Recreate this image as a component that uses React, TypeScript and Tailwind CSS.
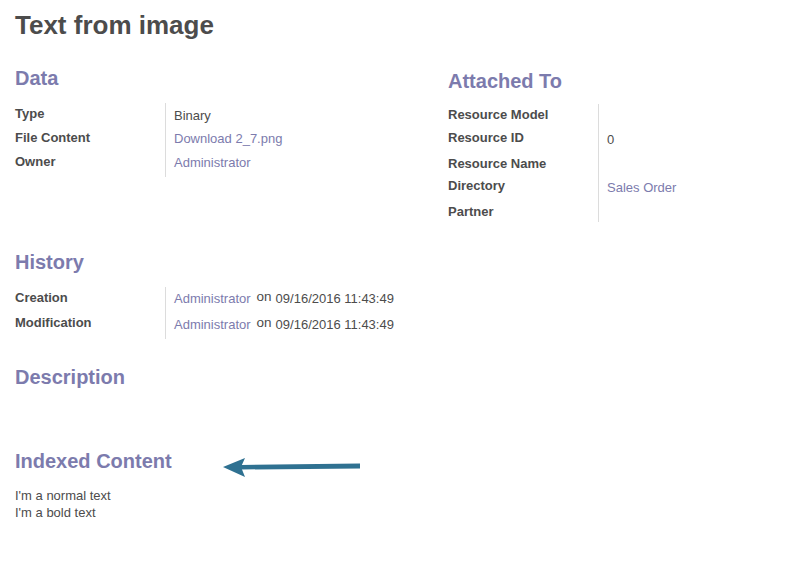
import React from "react";

const font = { fontFamily: '"Liberation Sans", Arial, Helvetica, sans-serif' };

type Row = { label: string; value?: React.ReactNode; h: number; vpad?: number };

function Group({ rows, labelW = 150 }: { rows: Row[]; labelW?: number }) {
  return (
    <div className="flex flex-col">
      {rows.map((r, i) => (
        <div key={i} className="flex" style={{ height: r.h }}>
          <div
            className="shrink-0 pt-[2px] text-[13px] leading-[18px] font-bold text-[#4c4c4c]"
            style={{ width: labelW }}
          >
            {r.label}
          </div>
          <div
            className="flex-1 border-l border-[#dcdcdc] pl-[8px] text-[13px] leading-[18px] text-[#4c4c4c] whitespace-nowrap"
            style={{ paddingTop: r.vpad ?? 3 }}
          >
            {r.value}
          </div>
        </div>
      ))}
    </div>
  );
}

const Link = ({ children }: { children: React.ReactNode }) => (
  <span className="text-[#7c7bad]">{children}</span>
);

const Heading = ({ children, className = "" }: { children: React.ReactNode; className?: string }) => (
  <h2 className={`text-[20px] leading-[24px] font-bold text-[#7c7bad] ${className}`}>{children}</h2>
);

function HistoryValue() {
  return (
    <span className="inline-flex items-baseline">
      <Link>Administrator</Link>
      <span className="relative -top-[2px] ml-[6px] text-[13.5px]">on</span>
      <span className="ml-[4px]">09/16/2016 11:43:49</span>
    </span>
  );
}

export default function App() {
  return (
    <div className="relative min-h-[582px] w-[800px] bg-white px-[15px] pt-[10px]" style={font}>
      <h1 className="text-[26px] leading-[30px] font-bold text-[#4c4c4c]">Text from image</h1>

      <div className="grid grid-cols-[433px_1fr] items-start">
        <div className="flex flex-col">
          <Heading className="mt-[26px]">Data</Heading>
          <div className="mt-[13px]">
            <Group
              rows={[
                { label: "Type", value: "Binary", h: 24, vpad: 4 },
                { label: "File Content", value: <Link>Download 2_7.png</Link>, h: 24 },
                { label: "Owner", value: <Link>Administrator</Link>, h: 26 },
              ]}
            />
          </div>
        </div>
        <div className="flex flex-col">
          <Heading className="mt-[29px]">Attached To</Heading>
          <div className="mt-[11px]">
            <Group
              rows={[
                { label: "Resource Model", h: 23 },
                { label: "Resource ID", value: "0", h: 26, vpad: 4 },
                { label: "Resource Name", h: 22 },
                { label: "Directory", value: <Link>Sales Order</Link>, h: 26, vpad: 4 },
                { label: "Partner", h: 21 },
              ]}
            />
          </div>
        </div>
      </div>

      <Heading className="mt-[28px]">History</Heading>
      <div className="mt-[13px] w-[433px]">
        <Group
          rows={[
            { label: "Creation", value: <HistoryValue />, h: 25, vpad: 3 },
            { label: "Modification", value: <HistoryValue />, h: 27, vpad: 4 },
          ]}
        />
      </div>

      <Heading className="mt-[26px]">Description</Heading>

      <Heading className="mt-[60px]">Indexed Content</Heading>
      <div className="mt-[14px] text-[13px] leading-[17px] text-[#4c4c4c]">
        <p>I'm a normal text</p>
        <p>I'm a bold text</p>
      </div>

      <svg
        className="absolute left-[220px] top-[455px]"
        width="145"
        height="26"
        viewBox="0 0 145 26"
      >
        <polygon points="3,12 25,3 21,12 25,22" fill="#2f7191" />
        <polygon points="21,10 140,8.5 140,13.5 21,14.5" fill="#2f7191" />
      </svg>
    </div>
  );
}
